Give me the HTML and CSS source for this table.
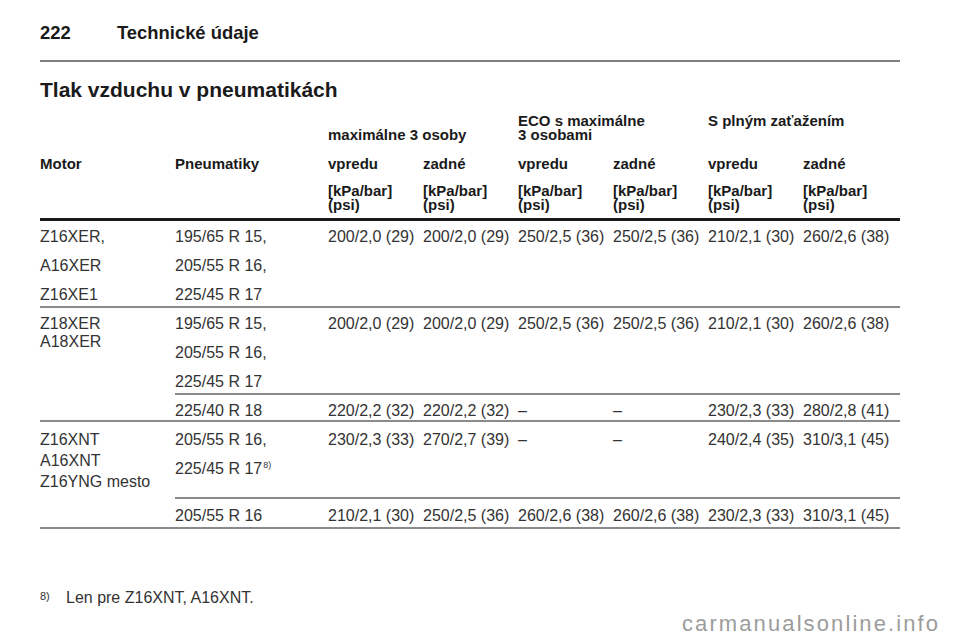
FILE: index.html
```html
<!DOCTYPE html>
<html lang="sk">
<head>
<meta charset="utf-8">
<title>Technické údaje</title>
<link rel="stylesheet" href="styles.css">
</head>
<body>
<div class="page">
  <header class="running-head">
    <span class="page-num">222</span>
    <span class="chapter">Technické údaje</span>
  </header>
  <h1 class="title">Tlak vzduchu v pneumatikách</h1>

  <div class="pressure">
    <div class="h"></div>
    <div class="h"></div>
    <div class="h group second">maximálne 3 osoby</div>
    <div class="h group">ECO s maximálne<br>3 osobami</div>
    <div class="h group">S plným zaťažením</div>

    <div class="h col-head">Motor</div>
    <div class="h col-head">Pneumatiky</div>
    <div class="h col-head">vpredu</div>
    <div class="h col-head">zadné</div>
    <div class="h col-head">vpredu</div>
    <div class="h col-head">zadné</div>
    <div class="h col-head">vpredu</div>
    <div class="h col-head">zadné</div>

    <div class="h unit"></div>
    <div class="h unit"></div>
    <div class="h unit">[kPa/bar]<br>(psi)</div>
    <div class="h unit">[kPa/bar]<br>(psi)</div>
    <div class="h unit">[kPa/bar]<br>(psi)</div>
    <div class="h unit">[kPa/bar]<br>(psi)</div>
    <div class="h unit">[kPa/bar]<br>(psi)</div>
    <div class="h unit">[kPa/bar]<br>(psi)</div>

    <!-- group 1 -->
    <div class="d">Z16XER,<br>A16XER<br>Z16XE1</div>
    <div class="d">195/65 R 15,<br>205/55 R 16,<br>225/45 R 17</div>
    <div class="d">200/2,0 (29)</div>
    <div class="d">200/2,0 (29)</div>
    <div class="d">250/2,5 (36)</div>
    <div class="d">250/2,5 (36)</div>
    <div class="d">210/2,1 (30)</div>
    <div class="d">260/2,6 (38)</div>

    <!-- group 2 -->
    <div class="d motor-a span2">Z18XER<br>A18XER</div>
    <div class="d">195/65 R 15,<br>205/55 R 16,<br>225/45 R 17</div>
    <div class="d">200/2,0 (29)</div>
    <div class="d">200/2,0 (29)</div>
    <div class="d">250/2,5 (36)</div>
    <div class="d">250/2,5 (36)</div>
    <div class="d">210/2,1 (30)</div>
    <div class="d">260/2,6 (38)</div>

    <div class="d">225/40 R 18</div>
    <div class="d">220/2,2 (32)</div>
    <div class="d">220/2,2 (32)</div>
    <div class="d">–</div>
    <div class="d">–</div>
    <div class="d">230/2,3 (33)</div>
    <div class="d">280/2,8 (41)</div>

    <!-- group 3 -->
    <div class="d motor-b span2">Z16XNT<br>A16XNT<br>Z16YNG mesto</div>
    <div class="d r3">205/55 R 16,<br>225/45 R 17<sup class="fn-ref">8)</sup></div>
    <div class="d r3">230/2,3 (33)</div>
    <div class="d r3">270/2,7 (39)</div>
    <div class="d r3">–</div>
    <div class="d r3">–</div>
    <div class="d r3">240/2,4 (35)</div>
    <div class="d r3">310/3,1 (45)</div>

    <div class="d r4">205/55 R 16</div>
    <div class="d r4">210/2,1 (30)</div>
    <div class="d r4">250/2,5 (36)</div>
    <div class="d r4">260/2,6 (38)</div>
    <div class="d r4">260/2,6 (38)</div>
    <div class="d r4">230/2,3 (33)</div>
    <div class="d r4">310/3,1 (45)</div>
  </div>

  <footer class="footnote">
    <span class="fn-mark">8)</span>
    <span class="fn-text">Len pre Z16XNT, A16XNT.</span>
  </footer>

  <div class="watermark">carmanualsonline.info</div>
</div>
</body>
</html>
```

FILE: styles.css
```css
html, body {
  margin: 0;
  padding: 0;
  background: #ffffff;
}

body {
  font-family: "Liberation Sans", Arial, Helvetica, sans-serif;
  color: #333333;
}

.page {
  position: relative;
  width: 960px;
  height: 642px;
  padding: 22px 60px 0 40px;
  box-sizing: border-box;
  overflow: hidden;
}

.running-head {
  display: flex;
  height: 38px;
  border-bottom: 2px solid #808080;
  font-size: 18.4px;
  line-height: 22px;
  font-weight: bold;
  color: #1a1a1a;
}

.page-num {
  width: 77px;
}

.title {
  margin: 15px 0 0;
  font-size: 21px;
  line-height: 26px;
  font-weight: bold;
  color: #1a1a1a;
}

.pressure {
  margin-top: 11px;
  display: grid;
  grid-template-columns: 135px 153px repeat(5, 95px) 97px;
  grid-template-rows: 42px 28px 37px 87px 87px 27px 77px 30px;
  font-size: 16px;
}

.pressure > div {
  box-sizing: border-box;
  white-space: nowrap;
}

.h {
  font-size: 15px;
  font-weight: bold;
  line-height: 14px;
  color: #1a1a1a;
}

.group {
  grid-column: span 2;
}

.group.second {
  padding-top: 14px;
}

.col-head {
  padding-top: 1px;
}

.unit {
  border-bottom: 3px solid #1a1a1a;
}

.d {
  line-height: 29px;
  padding-top: 1px;
  border-bottom: 2px solid #8a8a8a;
}

.span2 {
  grid-row: span 2;
}

.motor-a {
  line-height: 18px;
  padding-top: 7px;
}

.motor-b {
  line-height: 21px;
  padding-top: 7px;
}

.r3 {
  padding-top: 3px;
}

.r4 {
  padding-top: 2px;
}

.fn-ref {
  font-size: 9px;
  line-height: 0;
  vertical-align: 6px;
  margin-left: 1px;
}

.footnote {
  display: flex;
  align-items: flex-start;
  margin-top: 59px;
  font-size: 16px;
  line-height: 20px;
}

.fn-mark {
  width: 26px;
  font-size: 11px;
  line-height: 11px;
  margin-top: 3px;
}

.watermark {
  position: absolute;
  left: 682px;
  top: 611px;
  font-size: 22px;
  line-height: 26px;
  letter-spacing: 2.1px;
  color: #9c9c9c;
}
```
